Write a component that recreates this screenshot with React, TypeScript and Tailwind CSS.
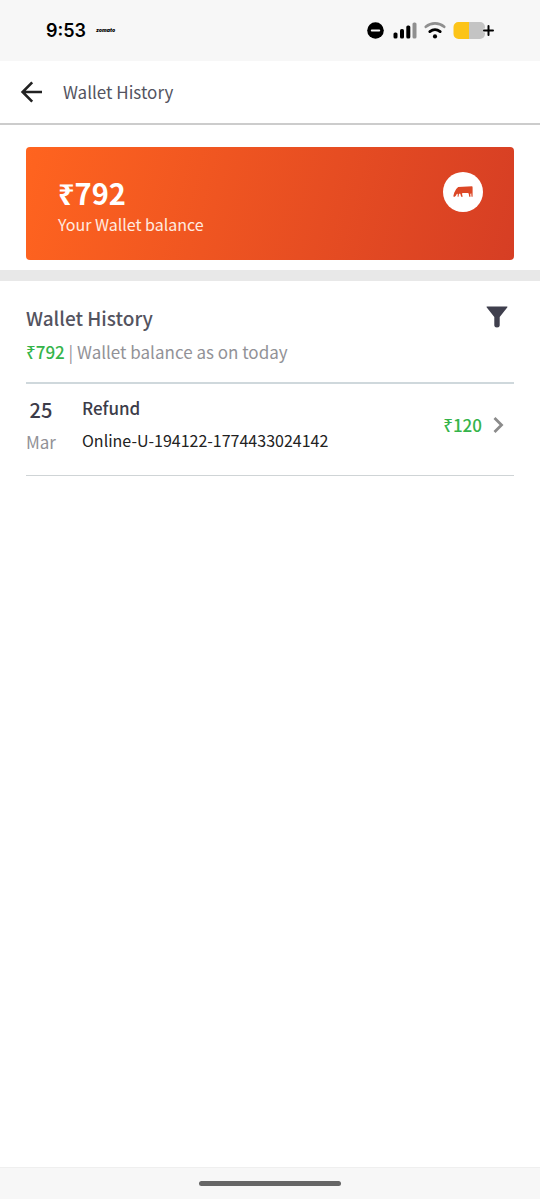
import React from "react";

interface Transaction {
    id: string;
    day: string;
    month: string;
    title: string;
    amount: number;
}

const balance = 792;

const transactions: Transaction[] = [
    { id: "Online-U-194122-1774433024142", day: "25", month: "Mar", title: "Refund", amount: 120 },
];

const StatusBar: React.FC = () => {
    return (
        <div className="flex h-[61px] shrink-0 items-center bg-[#f7f7f7] pl-[46px] pr-[45px] text-black">
            <span className="font-['Inter'] text-lg font-semibold">9:53</span>
            <span className="ml-2.5 font-['Inter'] text-[5px] font-black italic">zomato</span>
            <div className="ml-auto flex items-center">
                {/* Do not disturb */}
                <svg className="h-[17px] w-[17px]" viewBox="0 0 17 17">
                    <circle cx="8.5" cy="8.5" r="8.3" />
                    <path d="M4.8 8.5h7.4" stroke="#f7f7f7" strokeWidth="2" strokeLinecap="round" />
                </svg>
                {/* Signal */}
                <svg className="ml-[9px] h-[17px] w-6" viewBox="0 0 24 17">
                    <rect x="0.5" y="10.5" width="4" height="6" rx="1.6" />
                    <rect x="7" y="7" width="4" height="9.5" rx="1.6" />
                    <rect x="13.3" y="3.5" width="4" height="13" rx="1.6" />
                    <rect x="19.5" y="0.5" width="4" height="16" rx="1.6" fill="#8f8f8f" />
                </svg>
                {/* Wifi */}
                <svg className="ml-[7px] h-[17px] w-[22px]" viewBox="0 0 22 17" fill="none" strokeLinecap="round">
                    <path d="M1.8 4.8C7.2 0.2 14.8 0.2 20.2 4.8" stroke="#8f8f8f" strokeWidth="2.6" />
                    <path d="M5.8 9.6C9 7.1 13 7.1 16.2 9.6" stroke="#000" strokeWidth="2.8" />
                    <circle cx="11" cy="14.4" r="2.1" fill="#000" />
                </svg>
                {/* Battery */}
                <svg className="ml-[7px] h-[17px] w-[42px]" viewBox="0 0 42 17">
                    <path d="M5.5 0H16v17H5.5A5 5 0 0 1 .5 12V5a5 5 0 0 1 5-5z" fill="#fcc419" />
                    <path d="M16 0h11a5 5 0 0 1 5 5v7a5 5 0 0 1-5 5H16z" fill="#c4c4c4" />
                    <path d="M30.5 8.5h10M35.5 3.5v10" stroke="#f7f7f7" strokeWidth="4" />
                    <path d="M31 8.5h9M35.5 4v9" stroke="#000" strokeWidth="2" strokeLinecap="round" />
                </svg>
            </div>
        </div>
    );
};

const Header: React.FC = () => {
    return (
        <header className="flex h-16 shrink-0 items-center border-b-2 border-[#cccccc] pl-5">
            <button type="button" aria-label="Back" className="cursor-pointer">
                <svg className="h-6 w-6" viewBox="0 0 24 24" fill="none" stroke="#222" strokeWidth="2.6">
                    <path d="M22 12H3M12.2 2.3L2.6 12l9.6 9.7" />
                </svg>
            </button>
            <h1 className="ml-[19px] text-[17px] leading-6 text-[#54545f]">Wallet History</h1>
        </header>
    );
};

const BalanceCard: React.FC = () => {
    return (
        <section className="border-b-11 border-[#e8e8e8] px-[26px] pt-[22px] pb-2.5">
            <div className="flex h-[113px] items-start justify-between rounded bg-linear-[105deg,#ff641f,#d63e24] pt-[25px] pr-[31px] pl-8 text-white">
                <div>
                    <p className="text-[29px] leading-10 font-bold">₹{balance}</p>
                    <p className="text-base leading-6 text-[#ffebe0]">Your Wallet balance</p>
                </div>
                <div className="flex h-10 w-10 items-center justify-center rounded-full bg-white">
                    <svg className="h-3 w-5" viewBox="0 0 20 12" fill="#dc4726">
                        <path d="M5.2 1L19.2.3l.4 1v9.5h-1.1l-.3-3.600-.9.900.2 2.700h-1.300l-.5-3.200-.8-.700-5 .2-1 .5.8 3.200H8.200L7.300 7.800l-1.300 0-.5 3H4.600l.2-3-1 .3-1.200 1.800-1.500 1-.8-.7.900-3.500L3.200 3z" />
                    </svg>
                </div>
            </div>
        </section>
    );
};

const TransactionRow: React.FC<{ item: Transaction }> = ({ item }) => {
    return (
        <li className="border-b border-[#cfd4d6]">
            <button type="button" className="flex h-[91px] w-full cursor-pointer items-start pt-2 pr-2 text-left">
                <span className="flex w-[30px] flex-col items-center pt-0.5">
                    <span className="text-xl leading-8 font-medium text-[#3c3c49]">{item.day}</span>
                    <span className="text-[17px] leading-8 text-[#929297]">{item.month}</span>
                </span>
                <span className="ml-[26px] flex grow flex-col">
                    <span className="text-[17px] leading-8 font-medium text-[#3c3c49]">{item.title}</span>
                    <span className="text-base leading-8 text-[#222]">{item.id}</span>
                </span>
                <span className="mt-[17px] flex items-center gap-2">
                    <span className="text-[17px] leading-8 font-medium text-[#35b44a]">₹{item.amount}</span>
                    <svg className="h-4 w-4" viewBox="0 0 16 16" fill="none" stroke="#8b8b8b" strokeWidth="2.8">
                        <path d="M4.500 1l7 7-7 7" />
                    </svg>
                </span>
            </button>
        </li>
    );
};

export default function App() {
    return (
        <div className="flex min-h-screen flex-col bg-white font-['Noto_Sans_CJK_SC','Noto_Sans',sans-serif]">
            <StatusBar />
            <Header />
            <main className="grow">
                <BalanceCard />
                <section className="px-[26px] pt-[21px]">
                    <div className="flex items-start justify-between">
                        <h2 className="text-[19px] leading-8 font-medium text-[#54545f]">Wallet History</h2>
                        <button type="button" aria-label="Filter" className="mt-1 mr-1.5 cursor-pointer">
                            <svg className="h-[22px] w-[22px]" viewBox="0 0 22 22" fill="#3f3f4d">
                                <path d="M1 .5h20q.8 0 .4.800L13.700 11v8.500q0 2-2.700 2t-2.700-2V11L.6 1.300Q.2.500 1 .500z" />
                            </svg>
                        </button>
                    </div>
                    <p className="mt-0.5 border-b-2 border-[#cfd8dc] pb-3.5 text-[17px] leading-8 text-[#929297]">
                        <span className="font-medium text-[#35b44a]">₹{balance}</span> | Wallet balance as on today
                    </p>
                    <ul>
                        {transactions.map((item) => (
                            <TransactionRow key={item.id} item={item} />
                        ))}
                    </ul>
                </section>
            </main>
            {/* Gesture bar */}
            <div className="flex h-8 shrink-0 items-center justify-center border-t border-[#efefef] bg-[#f7f7f7]">
                <div className="h-[5px] w-[142px] rounded-full bg-[#666]"></div>
            </div>
        </div>
    );
}
